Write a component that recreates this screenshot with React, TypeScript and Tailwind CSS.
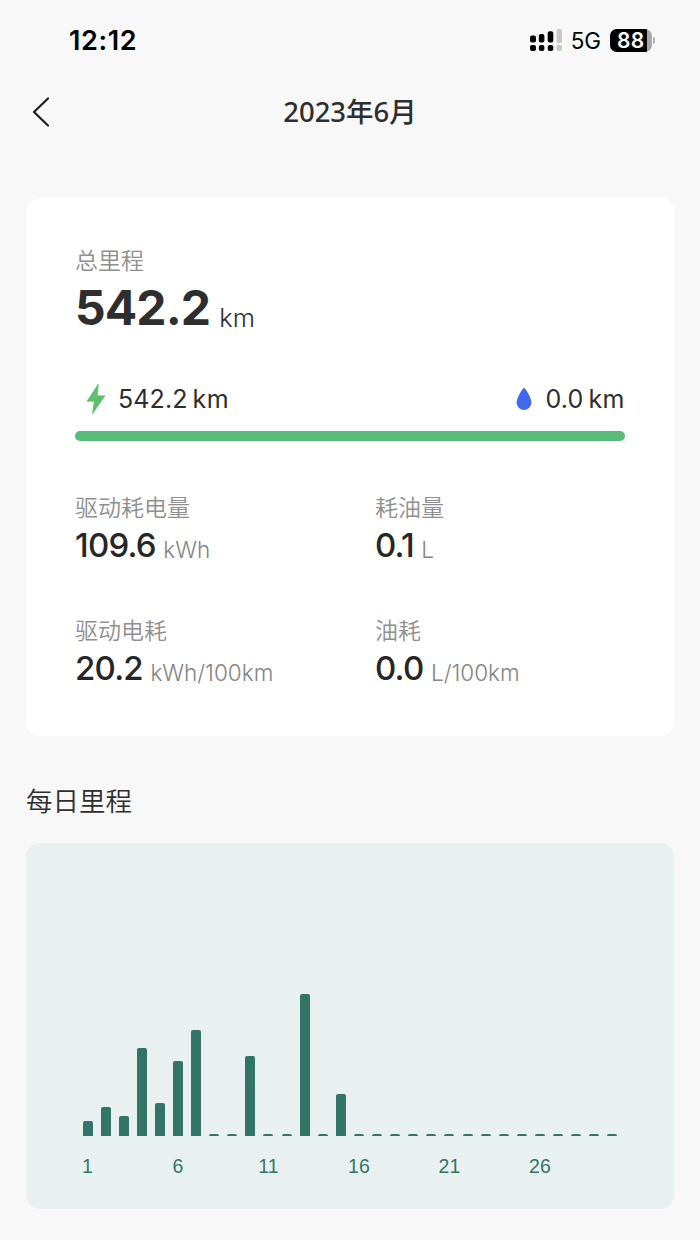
import { ReactNode } from 'react';

interface Stat {
  label: string;
  value: string;
  unit: string;
}

const stats: Stat[] = [
  { label: '驱动耗电量', value: '109.6', unit: 'kWh' },
  { label: '耗油量', value: '0.1', unit: 'L' },
  { label: '驱动电耗', value: '20.2', unit: 'kWh/100km' },
  { label: '油耗', value: '0.0', unit: 'L/100km' },
];

// bar heights in px, one per day of the month
const days = [
  15.5, 29, 20.5, 88, 33, 75, 106, 2, 2, 80, 2, 2, 142.5, 2, 42, 2, 2, 2, 2, 2, 2, 2, 2, 2, 2, 2, 2, 2, 2, 2,
];

function StatusBar() {
  return (
    <div className="flex h-20 items-center justify-between pr-[45px] pl-[69px] text-black">
      <span className="pt-px text-[27px] leading-8 font-semibold tracking-[0.6px]">12:12</span>
      <div className="flex items-center">
        <svg width="32" height="24" viewBox="0 0 32 24" className="mr-[9px]">
          <rect x="0" y="7.5" width="6" height="7" rx="2" />
          <rect x="8.8" y="6" width="5.6" height="8.5" rx="2" />
          <rect x="17.7" y="3.3" width="5.6" height="11.2" rx="2" />
          <rect x="26.6" y="1" width="5.4" height="14" rx="1.8" fill="#c8c8c8" />
          <rect x="0" y="17" width="6" height="6" rx="2" />
          <rect x="8.8" y="17" width="5.6" height="6" rx="2" />
          <rect x="17.7" y="17" width="5.6" height="6" rx="2" />
          <rect x="26.6" y="17" width="5.4" height="6" rx="1.8" fill="#c8c8c8" />
        </svg>
        <span className="mr-[9px] pt-px text-[22.500px] leading-6 tracking-[-0.1px]">5G</span>
        <div className="flex items-center">
          <div className="flex h-[23px] w-[42px] overflow-hidden rounded-[7px] bg-[#a8a8a8]">
            <span className="w-[37px] bg-black pl-[7px] text-[21px] leading-[23px] font-semibold tracking-[0.2px] text-white">
              88
            </span>
          </div>
          <span className="ml-px h-[7px] w-[2px] rounded-r-full bg-[#b0b0b0]" />
        </div>
      </div>
    </div>
  );
}

function Header() {
  return (
    <div className="grid h-16 grid-cols-[60px_1fr_60px] items-center">
      <svg width="20" height="32" viewBox="0 0 20 32" className="ml-[31px]" fill="none" stroke="#1c1c1c" strokeWidth="2.2">
        <path d="M17 2.5 3 16l14 13.5" strokeLinecap="round" strokeLinejoin="round" />
      </svg>
      <h1 className="text-center font-['Noto_Sans','Noto_Sans_CJK_SC',sans-serif] text-[27.500px] leading-8 font-medium text-[#2e2e2e]">
        2023年6月
      </h1>
    </div>
  );
}

function Label({ children }: { children: ReactNode }) {
  return (
    <div className="-mt-px mb-px font-['Noto_Sans_CJK_SC',sans-serif] text-[23px] leading-8 font-[350] text-[#8f8f8f]">
      {children}
    </div>
  );
}

function SummaryCard() {
  return (
    <section className="mx-[26px] mt-[54px] h-[538px] rounded-[14px] bg-white px-[49px] pt-[46px]">
      <Label>总里程</Label>
      <div className="flex items-baseline text-[#2e2e2e]">
        <span className="text-5xl leading-[64px] font-bold tracking-[-0.9px]">542.2</span>
        <span className="relative top-[2px] ml-[9px] text-[25.500px] font-light">km</span>
      </div>

      <div className="mt-[43px] flex h-8 items-center justify-between text-[25px] text-[#2e2e2e]">
        <div className="flex items-center">
          <svg width="20" height="32" viewBox="0 0 20 32" className="mr-[12px] ml-[11px]" fill="#5ebf6c">
            <path d="M12.3 1 1 18.3h7.2L6.4 31 19 12.8h-7.6Z" stroke="#5ebf6c" strokeWidth="0.6" strokeLinejoin="round" />
          </svg>
          <span className="pt-[2px] tracking-[0.1px]">542.2</span>
          <span className="ml-[5px] pt-[2px] tracking-[0.5px]">km</span>
        </div>
        <div className="flex items-center">
          <svg width="16" height="24" viewBox="0 0 16 24" className="mr-[14px]" fill="#4169f0">
            <path d="M8 .8C8.8.8 15.4 10.500 15.400 15.500a7.400 7.600 0 0 1-14.800 0C.6 10.500 7.200.8 8 .8Z" />
          </svg>
          <span className="pt-[2px] tracking-[0.1px]">0.0</span>
          <span className="ml-[5px] pt-[2px] tracking-[0.5px]">km</span>
        </div>
      </div>
      <div className="mt-4 h-[10px] rounded-full bg-[#57bc78]" />

      <div className="mt-[50px] grid grid-cols-[300px_1fr] gap-y-[48px]">
        {stats.map((stat) => (
          <div key={stat.label}>
            <Label>{stat.label}</Label>
            <div className="flex items-baseline">
              <span className="pt-px text-[33px] leading-[42px] font-medium tracking-[-0.8px] text-[#262626]">
                {stat.value}
              </span>
              <span className="relative top-px ml-[7.500px] text-[22.500px] leading-8 font-light text-[#848484]">
                {stat.unit}
              </span>
            </div>
          </div>
        ))}
      </div>
    </section>
  );
}

function DailyChart() {
  return (
    <section className="mx-[26px] mt-[27px] h-[366px] rounded-[14px] bg-[#e8f1ef] pt-[150px] pl-[52.500px]">
      <div className="flex h-[143px] w-[543px] items-end">
        {days.map((height, i) => (
          <div key={i} className="flex flex-1 justify-center">
            <div className="w-[10px] rounded-t-[2px] bg-[#327566]" style={{ height }} />
          </div>
        ))}
      </div>
      <div className="mt-[18px] flex w-[543px]">
        {days.map((_, i) => (
          <div
            key={i}
            className="flex w-0 flex-1 justify-center font-['Liberation_Sans',sans-serif] text-[19.500px] leading-6 text-[#327566]"
          >
            {i % 5 === 0 && <span>{i + 1}</span>}
          </div>
        ))}
      </div>
    </section>
  );
}

export default function App() {
  return (
    <div className="h-[1240px] w-[700px] overflow-hidden bg-[#f8f8f8] font-['Inter',sans-serif]">
      <StatusBar />
      <Header />
      <SummaryCard />
      <h2 className="mt-[48px] ml-[26px] font-['Noto_Sans_CJK_SC',sans-serif] text-[26.500px] leading-8 font-[350] text-[#2e2e2e]">
        每日里程
      </h2>
      <DailyChart />
    </div>
  );
}
